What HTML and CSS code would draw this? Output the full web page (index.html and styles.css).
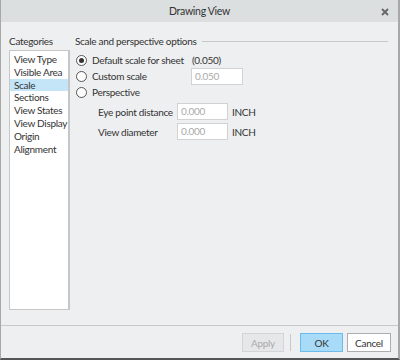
FILE: index.html
```html
<!DOCTYPE html>
<html>
<head>
<meta charset="utf-8">
<link rel="stylesheet" href="styles.css">
</head>
<body>
<div class="window">
  <div class="titlebar">
    <span class="title">Drawing View</span>
    <svg class="close" width="8" height="8" viewBox="0 0 8 8"><path d="M1 1L7 7M7 1L1 7" stroke="#666" stroke-width="1.8"/></svg>
  </div>
  <div class="content">
    <div class="cats">
      <div class="cats-label">Categories</div>
      <ul class="list">
        <li>View Type</li>
        <li>Visible Area</li>
        <li class="sel">Scale</li>
        <li>Sections</li>
        <li>View States</li>
        <li>View Display</li>
        <li>Origin</li>
        <li>Alignment</li>
      </ul>
    </div>
    <div class="panel">
      <div class="group-head"><span>Scale and perspective options</span><span class="rule"></span></div>
      <div class="row">
        <div class="opt"><span class="radio on"></span>Default scale for sheet</div>
        <div class="val">(0.050)</div>
      </div>
      <div class="row">
        <div class="opt"><span class="radio"></span>Custom scale</div>
        <div class="input wide">0.050</div>
      </div>
      <div class="row">
        <div class="opt"><span class="radio"></span>Perspective</div>
      </div>
      <div class="sub">
        <div class="subrow"><span class="sublabel">Eye point distance</span><span class="input">0.000</span><span class="unit">INCH</span></div>
        <div class="subrow"><span class="sublabel">View diameter</span><span class="input">0.000</span><span class="unit">INCH</span></div>
      </div>
    </div>
  </div>
  <div class="footer">
    <button class="btn apply">Apply</button>
    <span class="vsep"></span>
    <button class="btn ok">OK</button>
    <button class="btn cancel">Cancel</button>
  </div>
</div>
</body>
</html>
```

FILE: styles.css
```css
html, body {
  margin: 0;
  padding: 0;
}
body {
  width: 400px;
  height: 360px;
  font-family: Lato, "Open Sans", sans-serif;
  font-size: 10px;
  letter-spacing: -0.3px;
  color: #333;
  background: #eeeff0;
}
.window {
  width: 400px;
  height: 360px;
  box-sizing: border-box;
  border-left: 1px solid #a8a8a8;
  border-right: 2px solid #a8a8a8;
  border-bottom: 2px solid #555;
  display: flex;
  flex-direction: column;
  background: #eeeff0;
}
.titlebar {
  height: 22px;
  flex: none;
  background: #dcdfe0;
  display: flex;
  align-items: center;
  justify-content: center;
  position: relative;
}
.title {
  font-size: 10.5px;
  color: #333;
}
.close {
  position: absolute;
  right: 9px;
  top: 8px;
}
.content {
  flex: 1;
  display: flex;
  padding: 12px 8px 15px 8px;
  gap: 5px;
  border-bottom: 1px solid #c8c8c8;
}
.cats {
  width: 61px;
  display: flex;
  flex-direction: column;
}
.cats-label {
  height: 14px;
  line-height: 14px;
  margin-bottom: 2px;
  white-space: nowrap;
}
.list {
  list-style: none;
  margin: 0;
  padding: 2px 0 0 0;
  flex: 1;
  background: #fff;
  border: 1px solid #c6c6c6;
  border-right-width: 2px;
}
.list li {
  height: 12.8px;
  line-height: 12.8px;
  padding-left: 4px;
  white-space: nowrap;
  overflow: hidden;
}
.list li.sel {
  background: #c4e4f7;
}
.panel {
  flex: 1;
  display: flex;
  flex-direction: column;
}
.group-head {
  display: flex;
  align-items: center;
  height: 14px;
  margin-bottom: 4px;
}
.rule {
  flex: 1;
  height: 1px;
  background: #c8c8c8;
  margin: 0 2px 0 6px;
}
.row {
  display: flex;
  align-items: center;
  height: 16px;
}
.opt {
  width: 116px;
  display: flex;
  align-items: center;
  white-space: nowrap;
}
.radio {
  width: 9px;
  height: 9px;
  border: 1px solid #555;
  border-radius: 50%;
  background: #fff;
  margin: 0 5px 0 1px;
  position: relative;
  flex: none;
}
.radio.on::after {
  content: "";
  position: absolute;
  left: 2px;
  top: 2px;
  width: 5px;
  height: 5px;
  border-radius: 50%;
  background: #333;
}
.val {
  padding-left: 1px;
}
.input {
  box-sizing: border-box;
  width: 51px;
  height: 17px;
  line-height: 15px;
  background: #fff;
  border: 1px solid #d2d2d2;
  color: #aaa;
  padding-left: 3px;
}
.input.wide {
  width: 52px;
  height: 17px;
}
.sub {
  margin-top: 3px;
  padding-left: 23px;
  display: flex;
  flex-direction: column;
  gap: 3px;
}
.subrow {
  display: flex;
  align-items: center;
  height: 17px;
}
.sublabel {
  width: 79px;
  white-space: nowrap;
}
.unit {
  margin-left: 4px;
}
.footer {
  height: 32px;
  flex: none;
  display: flex;
  align-items: flex-start;
  justify-content: flex-end;
  padding: 7px 7px 0 0;
  box-sizing: border-box;
  gap: 4px;
}
.btn {
  font-family: inherit;
  font-size: 10px;
  letter-spacing: -0.3px;
  height: 19px;
  width: 44px;
  padding: 0;
  box-sizing: border-box;
  border: 1px solid #adadad;
  background: #fff;
  color: #333;
}
.btn.apply {
  width: 42px;
  background: #e6e7e8;
  border-color: #d4d4d4;
  color: #aaa;
}
.vsep {
  width: 1px;
  height: 17px;
  margin: 1px 5px 0 2px;
  background: #c8c8c8;
}
.btn.ok {
  width: 43px;
  background: #a8dbf8;
  border-color: #6cbbea;
}
```
